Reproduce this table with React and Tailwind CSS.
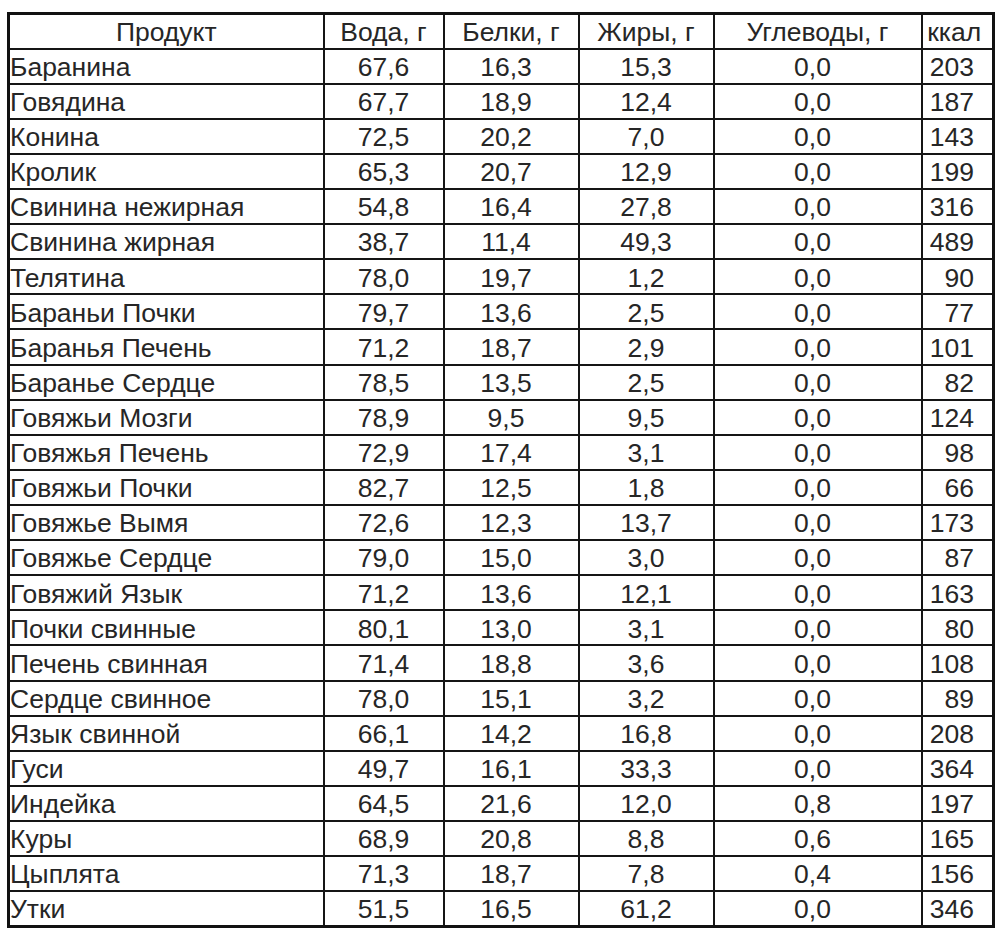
const rows = [
  ['Баранина', '67,6', '16,3', '15,3', '0,0', '203'],
  ['Говядина', '67,7', '18,9', '12,4', '0,0', '187'],
  ['Конина', '72,5', '20,2', '7,0', '0,0', '143'],
  ['Кролик', '65,3', '20,7', '12,9', '0,0', '199'],
  ['Свинина нежирная', '54,8', '16,4', '27,8', '0,0', '316'],
  ['Свинина жирная', '38,7', '11,4', '49,3', '0,0', '489'],
  ['Телятина', '78,0', '19,7', '1,2', '0,0', '90'],
  ['Бараньи Почки', '79,7', '13,6', '2,5', '0,0', '77'],
  ['Баранья Печень', '71,2', '18,7', '2,9', '0,0', '101'],
  ['Баранье Сердце', '78,5', '13,5', '2,5', '0,0', '82'],
  ['Говяжьи Мозги', '78,9', '9,5', '9,5', '0,0', '124'],
  ['Говяжья Печень', '72,9', '17,4', '3,1', '0,0', '98'],
  ['Говяжьи Почки', '82,7', '12,5', '1,8', '0,0', '66'],
  ['Говяжье Вымя', '72,6', '12,3', '13,7', '0,0', '173'],
  ['Говяжье Сердце', '79,0', '15,0', '3,0', '0,0', '87'],
  ['Говяжий Язык', '71,2', '13,6', '12,1', '0,0', '163'],
  ['Почки свинные', '80,1', '13,0', '3,1', '0,0', '80'],
  ['Печень свинная', '71,4', '18,8', '3,6', '0,0', '108'],
  ['Сердце свинное', '78,0', '15,1', '3,2', '0,0', '89'],
  ['Язык свинной', '66,1', '14,2', '16,8', '0,0', '208'],
  ['Гуси', '49,7', '16,1', '33,3', '0,0', '364'],
  ['Индейка', '64,5', '21,6', '12,0', '0,8', '197'],
  ['Куры', '68,9', '20,8', '8,8', '0,6', '165'],
  ['Цыплята', '71,3', '18,7', '7,8', '0,4', '156'],
  ['Утки', '51,5', '16,5', '61,2', '0,0', '346'],
];

const cell = 'border-2 border-[#151515] p-0 pt-[2px] leading-none';

export default function App() {
  return (
    <div
      className="w-[1000px] h-[936px] bg-white pt-[12px] pl-[7px] text-[#262626] text-[26.5px]"
      style={{ fontFamily: '"Liberation Sans", Arial, sans-serif' }}
    >
      <table className="table-fixed border-collapse border-[3px] border-[#111] w-[985px]">
        <colgroup>
          <col className="w-[315px]" />
          <col className="w-[120px]" />
          <col className="w-[135px]" />
          <col className="w-[135px]" />
          <col className="w-[208px]" />
          <col className="w-[72px]" />
        </colgroup>
        <thead>
          <tr className="h-[35.12px]">
            <th className={`${cell} font-normal text-center`}>Продукт</th>
            <th className={`${cell} font-normal text-center`}>Вода, г</th>
            <th className={`${cell} font-normal text-center`}>Белки, г</th>
            <th className={`${cell} font-normal text-center`}>Жиры, г</th>
            <th className={`${cell} font-normal text-center`}>Углеводы, г</th>
            <th className={`${cell} font-normal text-center pr-[6px]`}>ккал</th>
          </tr>
        </thead>
        <tbody>
          {rows.map(r => (
            <tr key={r[0]} className="h-[35.12px]">
              <td className={`${cell} text-left pl-0 whitespace-nowrap`}>{r[0]}</td>
              <td className={`${cell} text-center`}>{r[1]}</td>
              <td className={`${cell} text-center pr-[10px]`}>{r[2]}</td>
              <td className={`${cell} text-center`}>{r[3]}</td>
              <td className={`${cell} text-center pr-[10px]`}>{r[4]}</td>
              <td className={`${cell} text-right pr-[18px]`}>{r[5]}</td>
            </tr>
          ))}
        </tbody>
      </table>
    </div>
  );
}
